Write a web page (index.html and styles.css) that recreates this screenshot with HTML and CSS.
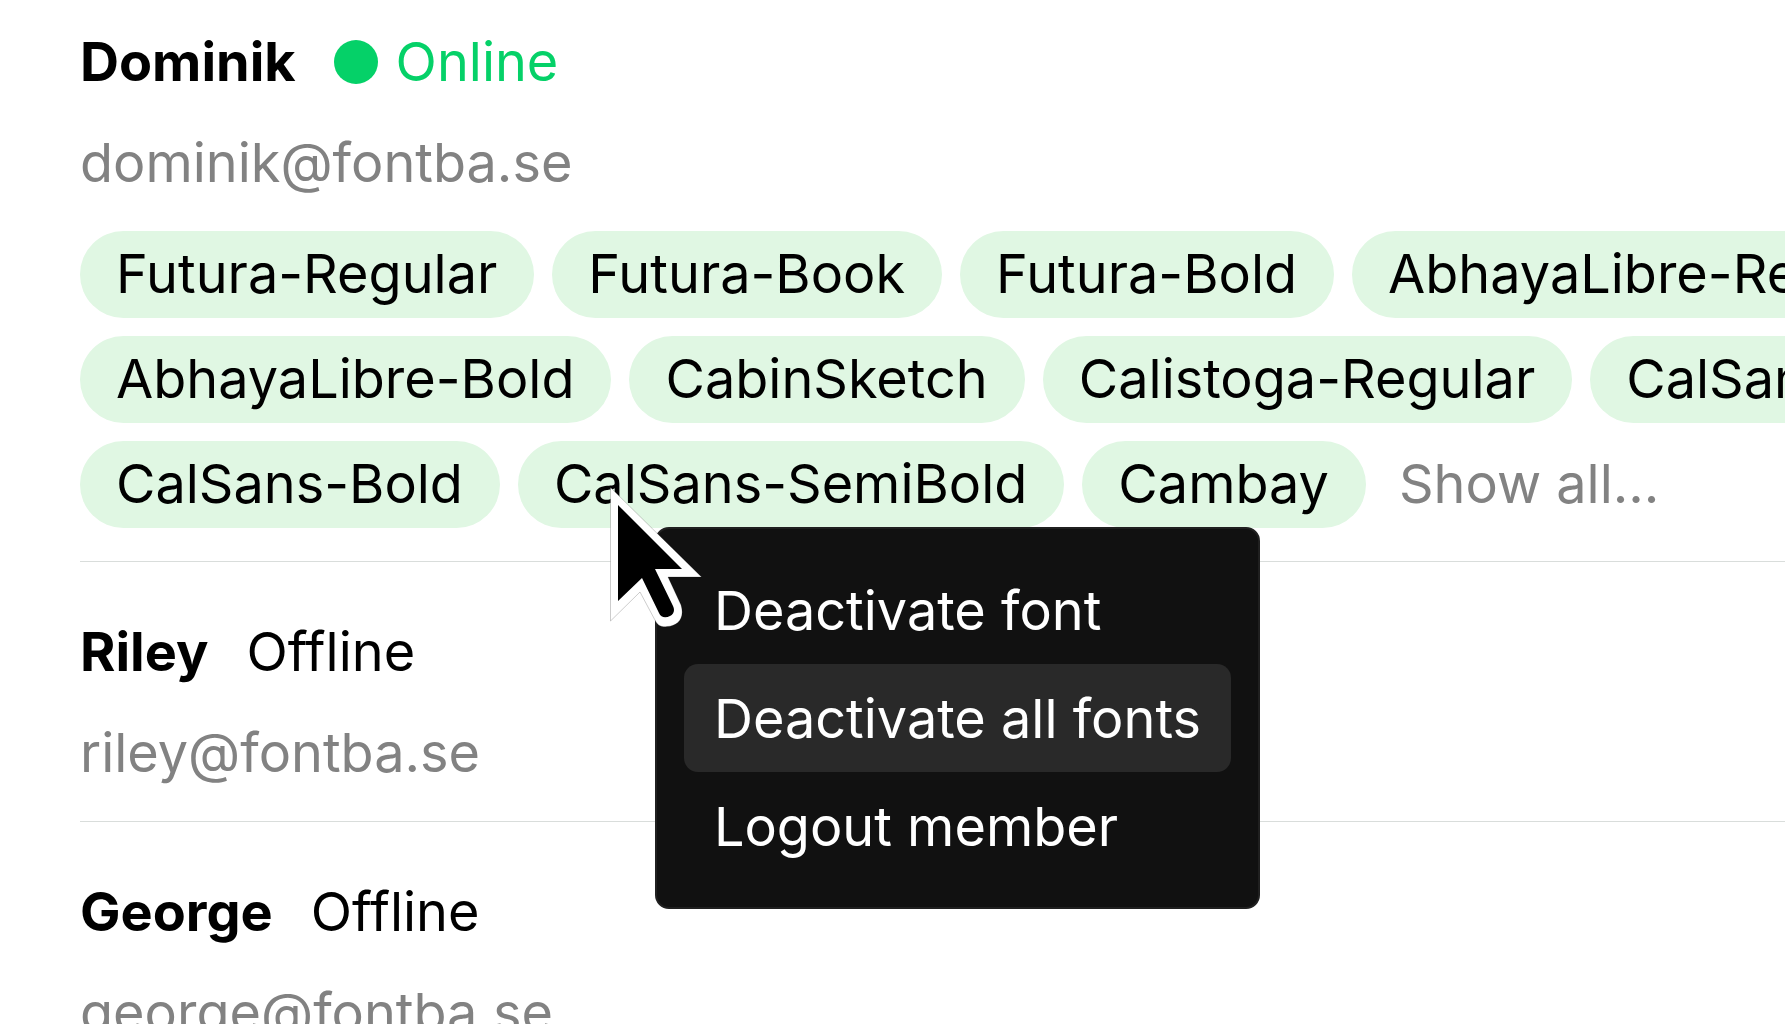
FILE: index.html
```html
<!DOCTYPE html>

<html lang="en">
<head>
	<meta charset="utf-8" />
	<title>Team members</title>
	<link rel="stylesheet" href="styles.css">
</head>

<body>
	<main class="members">
		<section class="member">
			<div class="member-head">
				<h2 class="name">Dominik</h2>
				<span class="status online">Online</span>
			</div>
			<p class="email">dominik@fontba.se</p>

			<div class="fonts">
				<div class="font-row">
					<span class="font">Futura-Regular</span>
					<span class="font">Futura-Book</span>
					<span class="font">Futura-Bold</span>
					<span class="font">AbhayaLibre-Regular</span>
				</div>
				<div class="font-row">
					<span class="font">AbhayaLibre-Bold</span>
					<span class="font">CabinSketch</span>
					<span class="font">Calistoga-Regular</span>
					<span class="font">CalSans-Regular</span>
				</div>
				<div class="font-row">
					<span class="font">CalSans-Bold</span>
					<div class="font-target">
						<span class="font">CalSans-SemiBold</span>
						<div class="menu">
							<button type="button">Deactivate font</button>
							<button type="button" class="button-selected">Deactivate all fonts</button>
							<button type="button">Logout member</button>
						</div>
						<svg class="cursor" width="92" height="142" viewBox="0 0 92 142" aria-hidden="true">
							<path d="M.5 .5V134L30 105L46 135C49 140 54 140 57 139.500C68 139 75 131 71 118L58 90H91.500Z" fill="#fff" stroke="#000" stroke-opacity=".2" stroke-width="1" />
							<path d="M8 18V114L32 91L49 126C51 131 56 131 60 129C64 127 65 123 63 119L45 82H72Z" fill="#000" />
						</svg>
					</div>
					<span class="font">Cambay</span>
					<button type="button" class="show-all">Show all...</button>
				</div>
			</div>
		</section>

		<section class="member">
			<div class="member-head">
				<h2 class="name">Riley</h2>
				<span class="status">Offline</span>
			</div>
			<p class="email">riley@fontba.se</p>
		</section>

		<section class="member">
			<div class="member-head">
				<h2 class="name">George</h2>
				<span class="status">Offline</span>
			</div>
			<p class="email">george@fontba.se</p>
		</section>
	</main>
</body>

</html>
```

FILE: styles.css
```css
* {
	margin: 0;
	padding: 0;
	box-sizing: border-box;
}

body {
	height: 100vh;
	overflow: hidden;
	background-color: #fff;
	color: #000;
	font-family: Inter, "Liberation Sans", sans-serif;
	font-size: 54px;
	line-height: 71px;
	white-space: nowrap;
}

button {
	border: none;
	background: none;
	color: inherit;
	font: inherit;
	text-align: left;
	cursor: pointer;
}

.members {
	padding-left: 80px;
}

.member {
	padding: 54px 0 33px;
	border-bottom: 1px solid #d9dddb;
}

.member:first-child {
	padding-top: 26px;
}

.member-head {
	display: flex;
	align-items: center;
	gap: 38px;
	margin-bottom: 30px;
}

.name {
	font-size: inherit;
	font-weight: 700;
}

.online {
	display: flex;
	align-items: center;
	gap: 18px;
	color: #05d168;
}

.online::before {
	content: '';
	width: 44px;
	height: 44px;
	border-radius: 50%;
	background-color: currentColor;
}

.email, .show-all {
	color: #828282;
}

/* Activated fonts */

.fonts {
	display: flex;
	flex-direction: column;
	gap: 18px;
	margin-top: 33px;
}

.font-row {
	display: flex;
	gap: 18px;
}

.font {
	display: block;
	flex: none;
	padding: 7px 37px 9px 36px;
	border-radius: 44px;
	background-color: #e0f7e3;
}

.font-target {
	position: relative;
}

.show-all {
	margin-left: 15px;
	padding: 7px 0 9px;
}

/* Context menu */

.menu {
	position: absolute;
	z-index: 1;
	top: 86px;
	left: 137px;
	display: flex;
	flex-direction: column;
	padding: 27px;
	border: 2px solid #202020;
	border-radius: 14px;
	background-color: #111;
	color: #fff;
}

.menu > button {
	padding: 19px 30px 17px;
	line-height: 72px;
	border-radius: 14px;
}

.menu > button:hover, .menu > .button-selected {
	background-color: #292929;
}

.cursor {
	position: absolute;
	z-index: 2;
	top: 46px;
	left: 92px;
}
```
